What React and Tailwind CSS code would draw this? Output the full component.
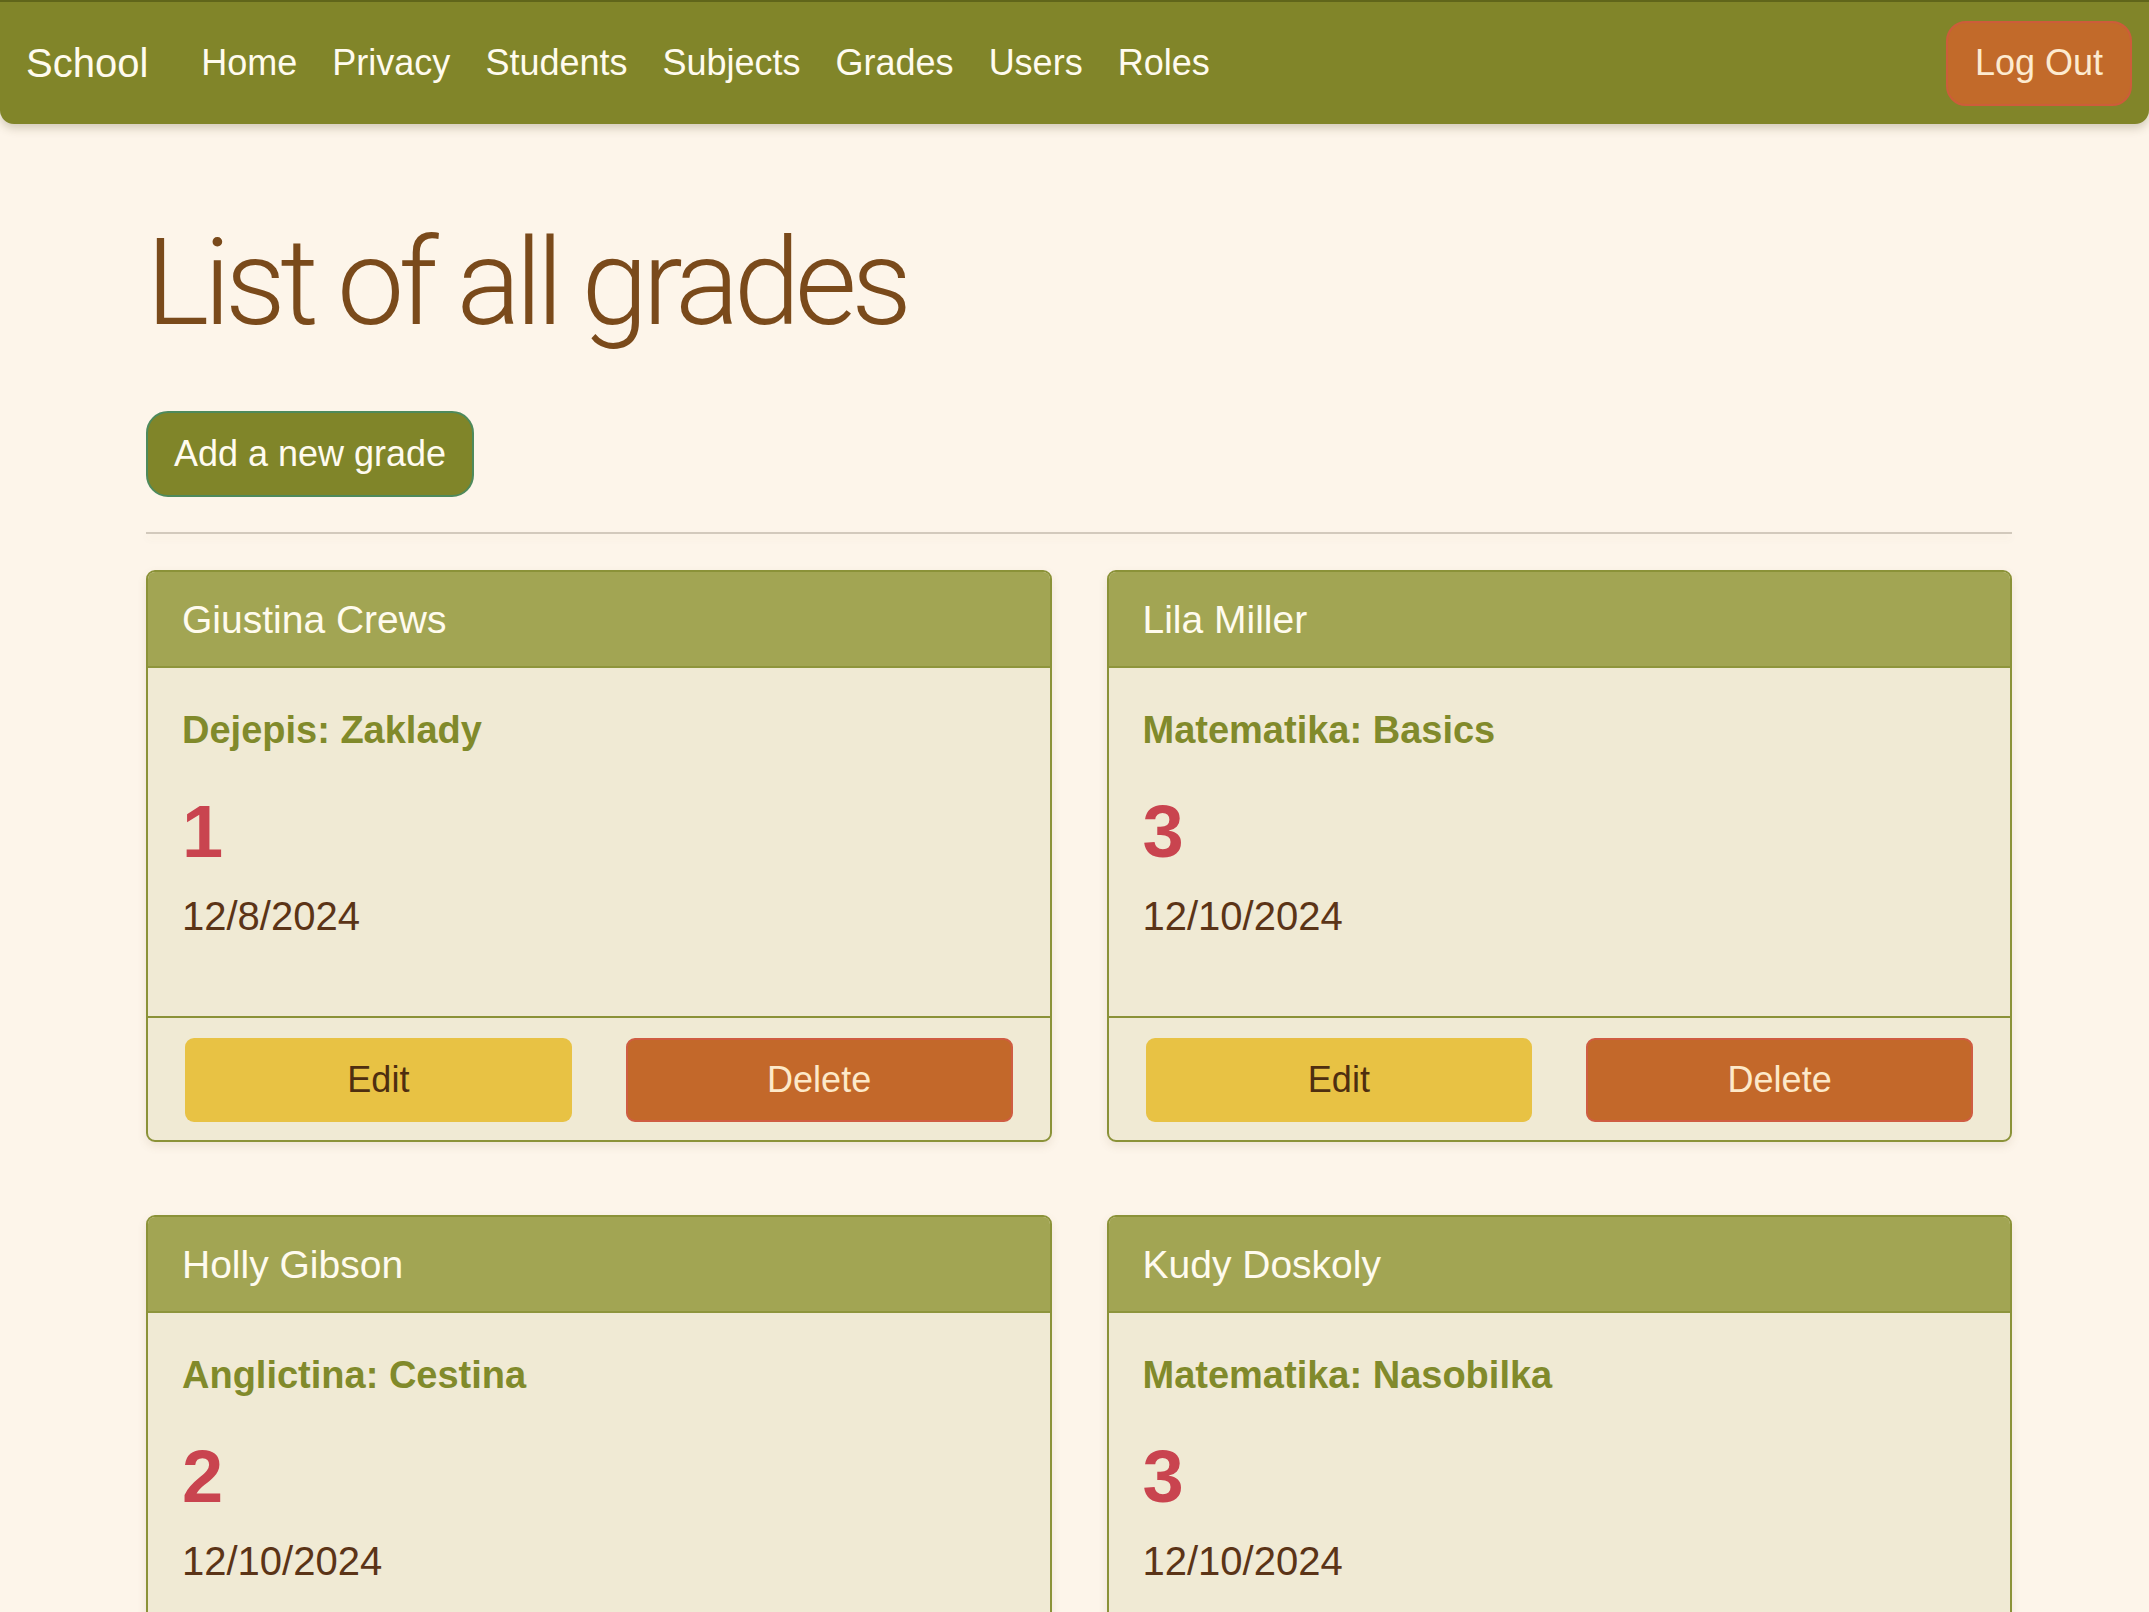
import React from "react";

const grades = [
  { name: "Giustina Crews", subject: "Dejepis: Zaklady", grade: "1", date: "12/8/2024" },
  { name: "Lila Miller", subject: "Matematika: Basics", grade: "3", date: "12/10/2024" },
  { name: "Holly Gibson", subject: "Anglictina: Cestina", grade: "2", date: "12/10/2024" },
  { name: "Kudy Doskoly", subject: "Matematika: Nasobilka", grade: "3", date: "12/10/2024" },
];

const navItems = ["Home", "Privacy", "Students", "Subjects", "Grades", "Users", "Roles"];

function Card({ g }) {
  return (
    <div className="flex flex-col overflow-hidden rounded-[9px] border-2 border-[#8b9238] bg-[#f0ead4] shadow-[0_4px_10px_rgba(120,100,60,0.12)]">
      <div className="flex h-[96px] items-center border-b-2 border-[#8e953c] bg-[#a2a553] px-[34px] text-[39px] leading-none text-[#fffbee]">
        {g.name}
      </div>
      <div className="flex h-[348px] flex-col px-[34px] pt-[40px]">
        <div className="text-[38px] font-bold leading-[44px] text-[#818a2b]">{g.subject}</div>
        <div className="mt-[43px] text-[74px] font-bold leading-[74px] text-[#c9444f]">{g.grade}</div>
        <div className="mt-[25px] text-[40px] leading-[44px] text-[#5b3417]">{g.date}</div>
      </div>
      <div className="grid grid-cols-2 gap-[54px] border-t-2 border-[#8b9238] px-[37px] pb-[18px] pt-[20px]">
        <button className="flex h-[84px] items-center justify-center rounded-[9px] bg-[#e8c244] text-[36px] text-[#4e2e10]">
          Edit
        </button>
        <button className="flex h-[84px] items-center justify-center rounded-[9px] border-2 border-[#cf5d42] bg-[#c3682a] text-[36px] text-[#fde9c9]">
          Delete
        </button>
      </div>
    </div>
  );
}

export default function App() {
  return (
    <div
      className="min-h-screen bg-[#fdf5ea]"
      style={{ fontFamily: '"Liberation Sans", Arial, sans-serif' }}
    >
      <nav className="flex h-[124px] items-center rounded-b-[14px] border-t-2 border-[#60651a] bg-[#818529] pl-[26px] pr-[17px] shadow-[0_4px_10px_rgba(80,70,30,0.25)]">
        <span className="text-[40px] leading-none text-[#fffbee]">School</span>
        <div className="ml-[53px] flex gap-[35px]">
          {navItems.map((n) => (
            <span key={n} className="text-[36px] leading-none text-[#fffbee]">
              {n}
            </span>
          ))}
        </div>
        <button className="ml-auto flex h-[85px] w-[186px] items-center justify-center rounded-[20px] border-2 border-[#cd5c3a] bg-[#c26a2a] text-[36px] text-[#fdebd0]">
          Log Out
        </button>
      </nav>

      <main className="ml-[146px] w-[1866px] pb-[40px]">
        <h1
          className="mt-[87px] text-[120px] font-light leading-[144px] tracking-[-5.6px] text-[#7a4a1b]"
          style={{ fontFamily: 'Roboto, "Liberation Sans", sans-serif' }}
        >
          List of all grades
        </h1>
        <button className="mt-[56px] flex h-[86px] w-[328px] items-center justify-center rounded-[22px] border-2 border-[#4e8a5c] bg-[#808529] text-[36px] text-[#fffbef]">
          Add a new grade
        </button>
        <div className="mt-[35px] h-[2px] bg-[#d2c9bc] shadow-[0_4px_8px_rgba(120,100,60,0.08)]" />
        <div className="mt-[36px] grid grid-cols-2 gap-x-[55px] gap-y-[73px]">
          {grades.map((g) => (
            <Card key={g.name} g={g} />
          ))}
        </div>
      </main>
    </div>
  );
}
